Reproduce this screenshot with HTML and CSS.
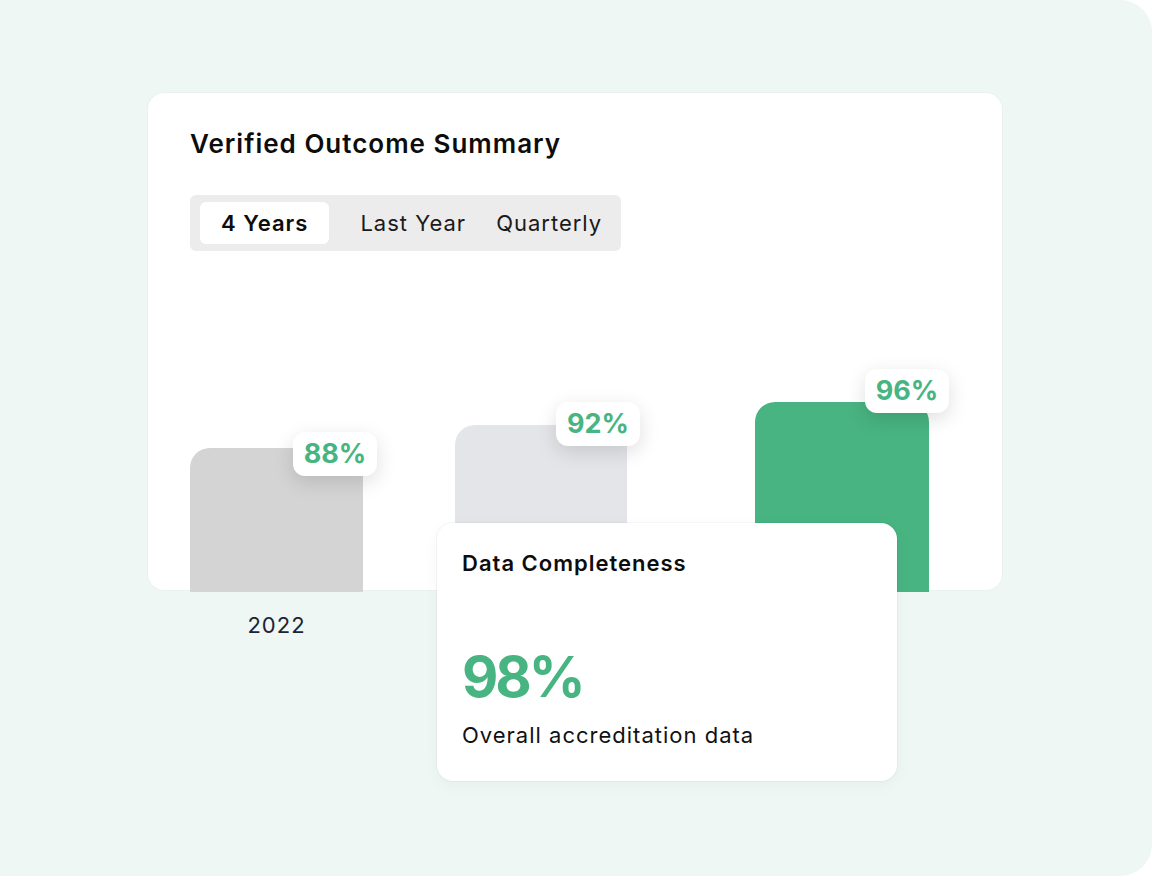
FILE: index.html
```html
<!DOCTYPE html>
<html lang="en">
<head>
    <meta charset="UTF-8">
    <meta name="viewport" content="width=device-width, initial-scale=1.0">
    <title>Verified Outcome Summary</title>
    <link rel="stylesheet" href="styles.css">
</head>
<body>
    <div class="panel">
        <div class="summary-card">
            <h2 class="summary-title">Verified Outcome Summary</h2>

            <div class="tabs">
                <div class="tab active">4 Years</div>
                <div class="tab">Last Year</div>
                <div class="tab">Quarterly</div>
            </div>

            <div class="chart">
                <div class="col col-1">
                    <div class="bar bar-old" style="height: 144px;">
                        <span class="badge badge-1">88%</span>
                    </div>
                    <div class="year">2022</div>
                </div>
                <div class="col col-2">
                    <div class="bar bar-mid" style="height: 167px;">
                        <span class="badge badge-2">92%</span>
                    </div>
                    <div class="year">2023</div>
                </div>
                <div class="col col-3">
                    <div class="bar bar-now" style="height: 190px;">
                        <span class="badge badge-3">96%</span>
                    </div>
                    <div class="year">2024</div>
                </div>
            </div>

            <div class="completeness">
                <div class="completeness-title">Data Completeness</div>
                <div class="completeness-value">98%</div>
                <div class="completeness-note">Overall accreditation data</div>
            </div>
        </div>
    </div>
</body>
</html>
```

FILE: styles.css
```css
body {
    margin: 0;
    padding: 0;
    background-color: #ffffff;
    font-family: Inter, "Noto Sans", sans-serif;
    color: #111111;
}
.panel {
    width: 1152px;
    height: 876px;
    box-sizing: border-box;
    padding: 93px 0 0 148px;
    background-color: #eef7f4;
    border-radius: 0 32px 32px 0;
    overflow: hidden;
}
.summary-card {
    position: relative;
    width: 854px;
    height: 497px;
    box-sizing: border-box;
    padding: 35px 42px 0 42px;
    background-color: #ffffff;
    border-radius: 16px;
    box-shadow: 0 0 0 1px rgba(0,0,0,0.02);
    letter-spacing: 1px;
}
.summary-title {
    margin: 0;
    font-size: 26px;
    line-height: 32px;
    font-weight: 600;
    color: #0d0d0d;
}
.tabs {
    display: inline-flex;
    align-items: center;
    margin-top: 35px;
    padding: 7px 0 7px 10px;
    background-color: #ececec;
    border-radius: 6px;
}
.tab {
    height: 42px;
    line-height: 42px;
    padding: 0 16px;
    font-size: 22px;
    color: #1a1a1a;
}
.tab + .tab + .tab {
    padding-left: 14px;
    padding-right: 19px;
}
.tab.active {
    padding: 0 21px;
    margin-right: 15px;
    background-color: #ffffff;
    border-radius: 6px;
    font-weight: 600;
    color: #0d0d0d;
}
.chart {
    display: flex;
    align-items: flex-end;
    height: 388px;
}
.col {
    display: flex;
    flex-direction: column;
    align-items: center;
}
.col-1 { width: 173px; }
.col-2 { width: 172px; margin-left: 92px; }
.col-3 { width: 174px; margin-left: 128px; }
.bar {
    position: relative;
    width: 100%;
    border-radius: 20px 20px 0 0;
}
.bar-old { background-color: #d4d4d4; }
.bar-mid { background-color: #e4e5e8; }
.bar-now { background-color: #48b481; }
.badge {
    position: absolute;
    width: 84px;
    height: 44px;
    line-height: 44px;
    text-align: center;
    background-color: #ffffff;
    border-radius: 12px;
    box-shadow: 0 6px 20px rgba(0,0,0,0.13);
    font-size: 27px;
    font-weight: 700;
    letter-spacing: 0;
    color: #48b481;
}
.badge-1 { top: -16px; right: -14px; }
.badge-2 { top: -23px; right: -13px; }
.badge-3 { top: -33px; right: -20px; }
.year {
    margin-top: 19px;
    font-size: 22px;
    line-height: 28px;
    color: #1c2333;
}
.completeness {
    position: absolute;
    left: 289px;
    top: 430px;
    width: 460px;
    height: 258px;
    box-sizing: border-box;
    padding: 26px 25px 0 25px;
    background-color: #ffffff;
    border-radius: 16px;
    box-shadow: 0 0 0 1px rgba(0,0,0,0.03), 0 4px 16px rgba(0,0,0,0.04);
}
.completeness-title {
    font-size: 22px;
    line-height: 28px;
    font-weight: 600;
    color: #0d0d0d;
}
.completeness-value {
    margin-top: 72px;
    font-size: 56px;
    line-height: 56px;
    font-weight: 700;
    letter-spacing: -3px;
    color: #48b481;
}
.completeness-note {
    margin-top: 16px;
    font-size: 22px;
    line-height: 28px;
    color: #111111;
}
```
